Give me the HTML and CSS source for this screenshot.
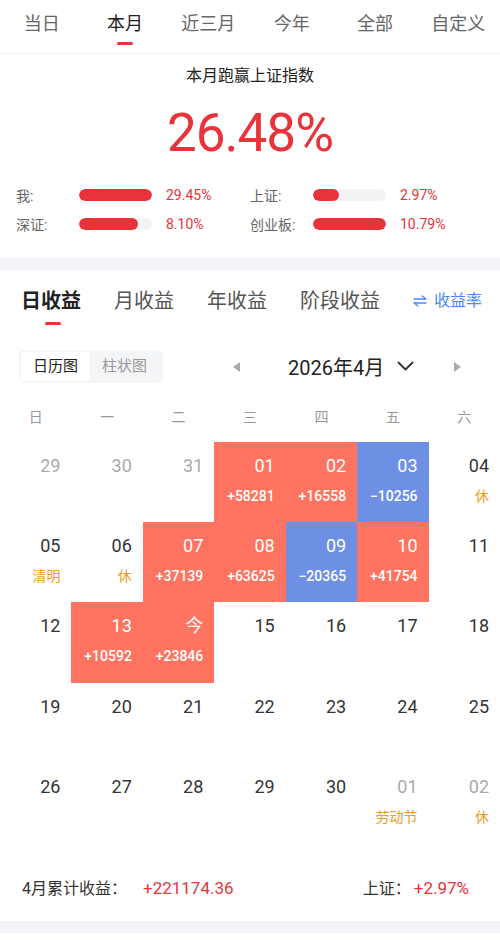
FILE: index.html
```html
<!DOCTYPE html>
<html lang="zh-CN">
<head>
    <meta charset="UTF-8">
    <meta name="viewport" content="width=device-width, initial-scale=1.0">
    <title>收益日历</title>
    <link rel="stylesheet" href="styles.css">
</head>
<body>
    <!-- Period tabs -->
    <nav class="period-tabs">
        <div class="period-tab">当日</div>
        <div class="period-tab active">本月</div>
        <div class="period-tab">近三月</div>
        <div class="period-tab">今年</div>
        <div class="period-tab">全部</div>
        <div class="period-tab">自定义</div>
    </nav>

    <!-- Summary -->
    <section class="summary">
        <h2 class="summary-title">本月跑赢上证指数</h2>
        <div class="summary-value">26.48%</div>
        <div class="stats">
            <div class="stat">
                <span class="stat-label">我:</span>
                <span class="stat-bar"><span class="stat-fill" style="width: 100%"></span></span>
                <span class="stat-value">29.45%</span>
            </div>
            <div class="stat">
                <span class="stat-label">上证:</span>
                <span class="stat-bar"><span class="stat-fill" style="width: 35%"></span></span>
                <span class="stat-value">2.97%</span>
            </div>
            <div class="stat">
                <span class="stat-label">深证:</span>
                <span class="stat-bar"><span class="stat-fill" style="width: 81%"></span></span>
                <span class="stat-value">8.10%</span>
            </div>
            <div class="stat">
                <span class="stat-label">创业板:</span>
                <span class="stat-bar"><span class="stat-fill" style="width: 100%"></span></span>
                <span class="stat-value">10.79%</span>
            </div>
        </div>
    </section>

    <div class="divider"></div>

    <!-- Profit calendar -->
    <section class="profit">
        <div class="profit-tabs">
            <div class="profit-tab active">日收益</div>
            <div class="profit-tab">月收益</div>
            <div class="profit-tab">年收益</div>
            <div class="profit-tab">阶段收益</div>
            <div class="rate-switch">
                <svg width="14" height="12" viewBox="0 0 14 12">
                    <path d="M1 4h12M9 1l4 3M13 8H1M5 11L1 8" fill="none" stroke="#4a8af0" stroke-width="1.3" stroke-linecap="round" stroke-linejoin="round"/>
                </svg>
                <span>收益率</span>
            </div>
        </div>

        <div class="toolbar">
            <div class="view-switch">
                <div class="view-btn active">日历图</div>
                <div class="view-btn">柱状图</div>
            </div>
            <div class="month-picker">
                <span class="arrow arrow-left"></span>
                <div class="month-label">
                    <span>2026年4月</span>
                    <svg width="17" height="11" viewBox="0 0 17 11">
                        <path d="M1.5 1.5l7 7 7-7" fill="none" stroke="#333" stroke-width="1.8" stroke-linecap="round" stroke-linejoin="round"/>
                    </svg>
                </div>
                <span class="arrow arrow-right"></span>
            </div>
        </div>

        <div class="weekdays">
            <span>日</span><span>一</span><span>二</span><span>三</span><span>四</span><span>五</span><span>六</span>
        </div>

        <div class="calendar">
            <div class="day muted"><span class="num">29</span></div>
            <div class="day muted"><span class="num">30</span></div>
            <div class="day muted"><span class="num">31</span></div>
            <div class="day gain"><span class="num">01</span><span class="amt">+58281</span></div>
            <div class="day gain"><span class="num">02</span><span class="amt">+16558</span></div>
            <div class="day loss"><span class="num">03</span><span class="amt">−10256</span></div>
            <div class="day"><span class="num">04</span><span class="note">休</span></div>

            <div class="day"><span class="num">05</span><span class="note">清明</span></div>
            <div class="day"><span class="num">06</span><span class="note">休</span></div>
            <div class="day gain"><span class="num">07</span><span class="amt">+37139</span></div>
            <div class="day gain"><span class="num">08</span><span class="amt">+63625</span></div>
            <div class="day loss"><span class="num">09</span><span class="amt">−20365</span></div>
            <div class="day gain"><span class="num">10</span><span class="amt">+41754</span></div>
            <div class="day"><span class="num">11</span></div>

            <div class="day"><span class="num">12</span></div>
            <div class="day gain"><span class="num">13</span><span class="amt">+10592</span></div>
            <div class="day gain"><span class="num">今</span><span class="amt">+23846</span></div>
            <div class="day"><span class="num">15</span></div>
            <div class="day"><span class="num">16</span></div>
            <div class="day"><span class="num">17</span></div>
            <div class="day"><span class="num">18</span></div>

            <div class="day"><span class="num">19</span></div>
            <div class="day"><span class="num">20</span></div>
            <div class="day"><span class="num">21</span></div>
            <div class="day"><span class="num">22</span></div>
            <div class="day"><span class="num">23</span></div>
            <div class="day"><span class="num">24</span></div>
            <div class="day"><span class="num">25</span></div>

            <div class="day"><span class="num">26</span></div>
            <div class="day"><span class="num">27</span></div>
            <div class="day"><span class="num">28</span></div>
            <div class="day"><span class="num">29</span></div>
            <div class="day"><span class="num">30</span></div>
            <div class="day muted"><span class="num">01</span><span class="note">劳动节</span></div>
            <div class="day muted"><span class="num">02</span><span class="note">休</span></div>
        </div>

        <div class="profit-footer">
            <div>4月累计收益：<span class="red total">+221174.36</span></div>
            <div>上证：<span class="red">+2.97%</span></div>
        </div>
    </section>

    <div class="divider"></div>
</body>
</html>
```

FILE: styles.css
```css
* {
    margin: 0;
    padding: 0;
    box-sizing: border-box;
}

body {
    background: #fff;
    font-family: Roboto, "Noto Sans CJK SC", sans-serif;
    color: #333;
    width: 500px;
}

.red { color: #e8333a; }

/* Period tabs */
.period-tabs {
    display: flex;
    height: 54px;
    border-bottom: 1px solid #f0f0f2;
}

.period-tab {
    flex: 1;
    text-align: center;
    font-size: 18px;
    line-height: 24px;
    padding-top: 12px;
    color: #666;
    position: relative;
}

.period-tab.active {
    color: #222;
}

.period-tab.active::after {
    content: "";
    position: absolute;
    left: 50%;
    top: 42px;
    width: 16px;
    height: 3px;
    margin-left: -8px;
    border-radius: 2px;
    background: #e8333a;
}

/* Summary */
.summary {
    padding: 11px 0 24px;
}

.summary-title {
    text-align: center;
    font-size: 16px;
    line-height: 22px;
    font-weight: 400;
    color: #222;
}

.summary-value {
    text-align: center;
    font-size: 53px;
    line-height: 62px;
    letter-spacing: -1px;
    color: #e8333a;
    margin-top: 15px;
}

.stats {
    display: grid;
    grid-template-columns: 234px 234px;
    row-gap: 9px;
    padding-left: 16px;
    margin-top: 21px;
}

.stat {
    display: flex;
    align-items: center;
    height: 20px;
    font-size: 14px;
}

.stat-label {
    width: 63px;
    color: #666;
}

.stat-bar {
    width: 73px;
    height: 12px;
    border-radius: 6px;
    background: #f2f3f5;
    overflow: hidden;
}

.stat-fill {
    display: block;
    height: 100%;
    border-radius: 6px;
    background: #e8333a;
}

.stat-value {
    margin-left: 14px;
    color: #e8333a;
}

.divider {
    height: 12px;
    background: #f3f4f7;
}

/* Profit section */
.profit-tabs {
    display: flex;
    align-items: flex-start;
    gap: 33px;
    padding: 17px 20px 0 21px;
    height: 64px;
    white-space: nowrap;
}

.profit-tab {
    flex-shrink: 0;
    font-size: 20px;
    line-height: 28px;
    color: #555;
    position: relative;
}

.profit-tab.active {
    color: #222;
    font-weight: 700;
}

.profit-tab.active::after {
    content: "";
    position: absolute;
    left: 24px;
    top: 35px;
    width: 16px;
    height: 3px;
    border-radius: 2px;
    background: #e8333a;
}

.rate-switch {
    flex-shrink: 0;
    margin-left: auto;
    display: flex;
    align-items: center;
    gap: 7px;
    font-size: 16px;
    line-height: 28px;
    color: #4a8af0;
}

.toolbar {
    display: flex;
    align-items: center;
    padding: 16px 0 0 19px;
}

.view-switch {
    display: flex;
    padding: 2px;
    background: #f4f5f7;
    border-radius: 5px;
    width: 144px;
}

.view-btn {
    width: 69px;
    height: 29px;
    line-height: 29px;
    text-align: center;
    font-size: 15px;
    color: #999;
    border-radius: 4px;
}

.view-btn.active {
    background: #fff;
    color: #222;
}

.month-picker {
    display: flex;
    align-items: center;
    margin-left: 70px;
}

.arrow {
    width: 0;
    height: 0;
    border-top: 5px solid transparent;
    border-bottom: 5px solid transparent;
}

.arrow-left {
    border-right: 7px solid #aaa;
}

.arrow-right {
    border-left: 7px solid #aaa;
    margin-left: 40px;
}

.month-label {
    display: flex;
    align-items: center;
    gap: 13px;
    margin-left: 48px;
    font-size: 20px;
    color: #222;
}

.weekdays {
    display: grid;
    grid-template-columns: repeat(7, 1fr);
    margin-top: 18px;
    height: 41px;
    line-height: 32px;
    font-size: 14px;
    color: #999;
    text-align: center;
}

/* Calendar grid */
.calendar {
    display: grid;
    grid-template-columns: repeat(7, 1fr);
    grid-auto-rows: 80.2px;
}

.day {
    display: flex;
    flex-direction: column;
    align-items: flex-end;
    padding: 12px 11px 0 0;
}

.num {
    font-size: 18px;
    line-height: 24px;
    color: #333;
}

.amt,
.note {
    font-size: 14px;
    line-height: 20px;
    margin-top: 8px;
}

.amt {
    color: #fff;
    font-weight: 500;
}

.note {
    color: #f29b1d;
}

.day.muted .num { color: #aaa; }

.day.gain { background: #ff7461; }
.day.loss { background: #6e90e4; }

.day.gain .num,
.day.loss .num {
    color: #fff;
}

.profit-footer {
    display: flex;
    justify-content: space-between;
    padding: 34px 31px 0 22px;
    height: 78px;
    font-size: 16px;
    line-height: 22px;
    color: #333;
}

.profit-footer .red {
    font-size: 17px;
    margin-left: 3px;
}

.profit-footer .total {
    margin-left: 16px;
}
```
